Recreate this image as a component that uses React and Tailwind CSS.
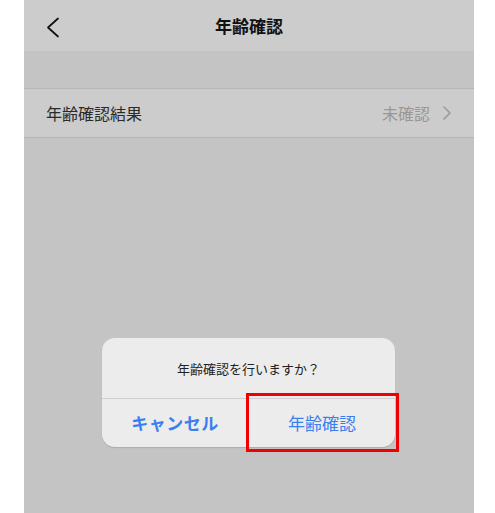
import React from "react";

// Age verification screen with confirmation dialog
function BackChevron() {
    return (
        <svg width="14" height="22" viewBox="0 0 14 22" fill="none">
            <polyline points="12,1.5 2,10.5 12,19.5" stroke="#111" strokeWidth="1.7" strokeLinecap="round" strokeLinejoin="round" />
        </svg>
    );
}

function RowChevron() {
    return (
        <svg width="10" height="14" viewBox="0 0 10 14" fill="none">
            <polyline points="2,1 8,7 2,13" stroke="#9a9a9a" strokeWidth="1.6" strokeLinecap="round" strokeLinejoin="round" />
        </svg>
    );
}

function ConfirmDialog() {
    return (
        <div className="relative w-[293px] h-[109px] rounded-[13px] bg-[#ececec] shadow-[0_1px_1px_rgba(0,0,0,0.12)] flex flex-col">
            <div className="h-[61px] flex items-center justify-center border-b border-[#cfcfcf] text-[13px] text-[#222] pt-[1px]">
                年齢確認を行いますか？
            </div>
            <div className="flex flex-1">
                <div className="flex-1 flex items-center justify-center text-[17px] font-bold text-[#3a7ff0] tracking-[0.5px]">
                    キャンセル
                </div>
                <div className="flex-1 flex items-center justify-center text-[17px] text-[#3a7ff0] border-l border-[#d4d4d4]">
                    年齢確認
                </div>
            </div>
            {/* highlight box */}
            <div className="absolute left-[144px] top-[55px] w-[153px] h-[59px] border-[3px] border-[#f00000]"></div>
        </div>
    );
}

export default function App() {
    return (
        <div className="h-[513px] bg-white flex justify-center pl-[3px]" style={{ fontFamily: '"Noto Sans CJK JP", "Noto Sans", sans-serif' }}>
            <div className="w-[450px] h-full flex flex-col bg-[#c4c4c4]">
                <div className="h-[51px] bg-[#cccccc] relative flex items-center justify-center">
                    <div className="absolute left-[22px] top-[17px]">
                        <BackChevron />
                    </div>
                    <span className="text-[17px] font-bold text-[#111]">年齢確認</span>
                </div>
                <div className="h-[37px]"></div>
                <div className="h-[50px] bg-[#cccccc] border-y border-[#b6b6b6] flex items-center justify-between pl-[22px] pr-[22px]">
                    <span className="text-[16px] text-[#2a2a2a]">年齢確認結果</span>
                    <div className="flex items-center gap-[12px]">
                        <span className="text-[16px] text-[#989898]">未確認</span>
                        <RowChevron />
                    </div>
                </div>
                <div className="flex-1 flex justify-center pt-[200px] pr-[1px]">
                    <ConfirmDialog />
                </div>
            </div>
        </div>
    );
}
